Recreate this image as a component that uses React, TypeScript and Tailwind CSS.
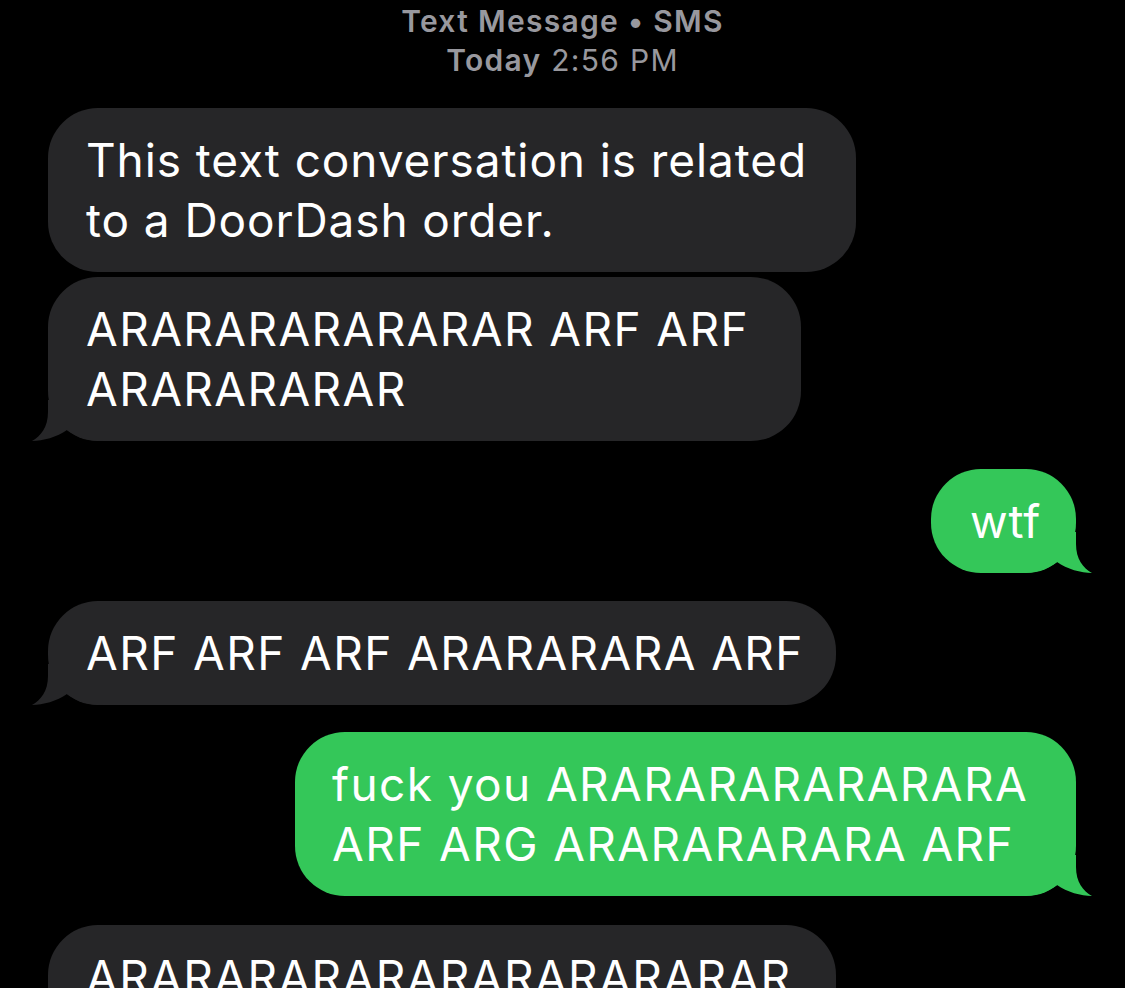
import React from "react";

const font = { fontFamily: "Inter, 'Noto Sans', sans-serif" };

function Tail({ side, color }: { side: "left" | "right"; color: string }) {
  return (
    <svg
      width="73"
      height="41"
      viewBox="0 0 73 41"
      className={
        side === "left"
          ? "absolute bottom-0 left-[-17px]"
          : "absolute bottom-0 right-[-17px] -scale-x-100"
      }
    >
      <path
        d="M17 0 L17 12 C17 27 10 36 1 41 C12 41 26 37 36 30 C46 38 58 41 73 41 L73 0 Z"
        fill={color}
      />
    </svg>
  );
}

function Bubble({
  children,
  me,
  tail,
  width,
  caps,
}: {
  children: React.ReactNode;
  me?: boolean;
  tail?: boolean;
  caps?: boolean;
  width: string;
}) {
  const color = me ? "#34c759" : "#262628";
  return (
    <div className={me ? "flex justify-end pr-[49px]" : "flex justify-start pl-[48px]"}>
      <div
        className={`relative whitespace-nowrap rounded-[50px] py-[22px] text-[46px] leading-[60px] text-white ${
          caps ? "tracking-[1.4px]" : "tracking-[0.9px]"
        } ${width} ${me ? "bg-[#34c759]" : "bg-[#262628]"}`}
      >
        {tail && <Tail side={me ? "right" : "left"} color={color} />}
        <div className="relative">{children}</div>
      </div>
    </div>
  );
}

export default function App() {
  return (
    <div className="h-[988px] w-[1125px] overflow-hidden bg-black" style={font}>
      <div className="flex flex-col items-center pt-[2px] text-[30px] leading-[39px] tracking-[1.3px] text-[#98989e]">
        <div className="font-semibold">Text Message • SMS</div>
        <div>
          <span className="font-semibold">Today</span> 2:56 PM
        </div>
      </div>

      <div className="mt-[28px] flex flex-col">
        <Bubble width="w-[808px] pl-[38px]">
          This text conversation is related
          <br />
          to a DoorDash order.
        </Bubble>
        <div className="h-[5px]" />
        <Bubble width="w-[753px] pl-[38px]" tail caps>
          ARARARARARARAR ARF ARF
          <br />
          ARARARARAR
        </Bubble>
        <div className="h-[28px]" />
        <Bubble width="w-[145px] pl-[39px]" me tail>
          wtf
        </Bubble>
        <div className="h-[28px]" />
        <Bubble width="w-[788px] pl-[38px]" tail caps>
          ARF ARF ARF ARARARARA ARF
        </Bubble>
        <div className="h-[27px]" />
        <Bubble width="w-[781px] pl-[37px]" me tail caps>
          fuck you ARARARARARARARA
          <br />
          ARF ARG ARARARARARA ARF
        </Bubble>
        <div className="h-[29px]" />
        <Bubble width="w-[788px] pl-[38px]" caps>
          ARARARARARARARARARARAR
          <br />
          ARARARA
        </Bubble>
      </div>
    </div>
  );
}
